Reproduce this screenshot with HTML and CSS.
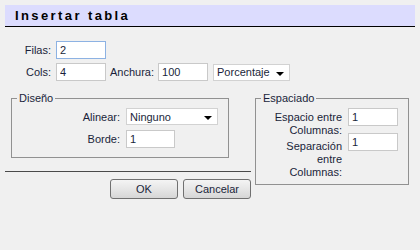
FILE: index.html
```html
<!DOCTYPE html>
<html lang="es">
<head>
  <meta charset="UTF-8">
  <title>Insertar tabla</title>
  <link rel="stylesheet" href="styles.css">
</head>
<body>
  <div class="titlebar">Insertar tabla</div>

  <!-- filas / columnas -->
  <div class="dims">
    <div class="row">
      <label class="lbl-main">Filas:</label>
      <input class="txt focus" type="text" value="2">
    </div>
    <div class="row">
      <label class="lbl-main">Cols:</label>
      <input class="txt" type="text" value="4">
      <label class="lbl-width">Anchura:</label>
      <input class="txt" type="text" value="100">
      <div class="sel sel-unit">
        <select><option>Porcentaje</option><option>Píxeles</option></select>
      </div>
    </div>
  </div>

  <div class="main">
    <div class="left">
      <fieldset class="box box-design">
        <legend>Diseño</legend>
        <div class="design-grid">
          <label>Alinear:</label>
          <div class="sel sel-align">
            <select><option>Ninguno</option><option>Izquierda</option><option>Centro</option><option>Derecha</option></select>
          </div>
          <label>Borde:</label>
          <input class="txt" type="text" value="1">
        </div>
      </fieldset>

      <div class="divider"></div>

      <div class="buttons">
        <button class="btn">OK</button>
        <button class="btn">Cancelar</button>
      </div>
    </div>

    <fieldset class="box box-spacing">
      <legend>Espaciado</legend>
      <div class="spacing-grid">
        <label class="lbl-first">Espacio entre Columnas:</label>
        <input class="txt" type="text" value="1">
        <label class="lbl-second">Separación entre Columnas:</label>
        <input class="txt" type="text" value="1">
      </div>
    </fieldset>
  </div>
</body>
</html>
```

FILE: styles.css
```css
/* general */
body {
  margin: 0;
  background: #f0f0f0;
  font-family: 'Liberation Sans', Arial, sans-serif;
  font-size: 11px;
  color: #1a1f3a;
}

/* title bar */
.titlebar {
  margin: 5px 5px 0 5px;
  height: 21px;
  line-height: 21px;
  padding-left: 10px;
  background: #dcdcfe;
  border-bottom: 1px solid #000;
  font-size: 13px;
  font-weight: bold;
  letter-spacing: 2.4px;
  color: #000;
}

/* inputs */
.txt {
  box-sizing: border-box;
  width: 50px;
  height: 18px;
  margin: 0;
  padding: 0 3px;
  border: 1px solid #c9c9c9;
  background: #fff;
  font-family: inherit;
  font-size: 11px;
  color: #1a1f3a;
  outline: none;
}

.txt.focus {
  border-color: #8db2e3;
}

.sel {
  position: relative;
  height: 17px;
}

.sel select {
  box-sizing: border-box;
  -webkit-appearance: none;
  appearance: none;
  width: 100%;
  height: 17px;
  margin: 0;
  padding: 0 0 0 3px;
  border: 1px solid #d2d2d2;
  border-radius: 0;
  background: #fff;
  font-family: inherit;
  font-size: 11px;
  color: #1a1f3a;
  outline: none;
}

/* flecha del select */
.sel::after {
  content: "";
  position: absolute;
  right: 6px;
  top: 8px;
  border-left: 4px solid transparent;
  border-right: 4px solid transparent;
  border-top: 4px solid #000;
  pointer-events: none;
}

/* filas y columnas */
.dims {
  margin-top: 14px;
  padding-left: 5px;
}

.row {
  display: flex;
  align-items: center;
  height: 18px;
  margin-bottom: 4px;
}

.lbl-main {
  width: 46px;
  margin-right: 5px;
  text-align: right;
}

.lbl-width {
  margin: 0 4px;
}

.sel-unit {
  width: 77px;
  margin-left: 5px;
}

/* parte inferior */
.main {
  display: flex;
  gap: 4px;
  padding: 0 5px;
  margin-top: 10px;
}

.left {
  width: 246px;
}

.box {
  box-sizing: border-box;
  margin: 0;
  padding: 0;
  border: 1px solid #919191;
  min-width: 0;
}

.box legend {
  margin-left: 5px;
  padding: 0 2px;
  line-height: 14px;
}

.box-design {
  width: 218px;
  margin-left: 6px;
}

.design-grid {
  display: grid;
  grid-template-columns: 108px auto;
  column-gap: 6px;
  row-gap: 5px;
  align-items: center;
  padding: 3px 0 9px 0;
}

.design-grid label {
  text-align: right;
}

.sel-align {
  width: 92px;
}

.design-grid .txt {
  width: 49px;
}

.divider {
  margin-top: 13px;
  border-top: 1px solid #4a4a4a;
}

.buttons {
  display: flex;
  justify-content: flex-end;
  gap: 5px;
  margin-top: 7px;
}

.btn {
  box-sizing: border-box;
  width: 68px;
  height: 20px;
  margin: 0;
  padding: 0;
  border: 1px solid #707070;
  border-radius: 3px;
  background: linear-gradient(#f4f4f4, #e6e6e6 50%, #d6d6d6);
  font-family: inherit;
  font-size: 11px;
  color: #1a1f3a;
}

/* espaciado */
.box-spacing {
  width: 154px;
  align-self: flex-start;
}

.spacing-grid {
  display: grid;
  grid-template-columns: 68px 49px;
  column-gap: 6px;
  justify-content: end;
  align-items: start;
  padding: 3px 11px 5px 0;
}

.spacing-grid label {
  text-align: right;
  line-height: 13px;
}

.lbl-first {
  margin-top: 3px;
  margin-bottom: -4px;
}

.lbl-second {
  margin-top: 7px;
}
```
